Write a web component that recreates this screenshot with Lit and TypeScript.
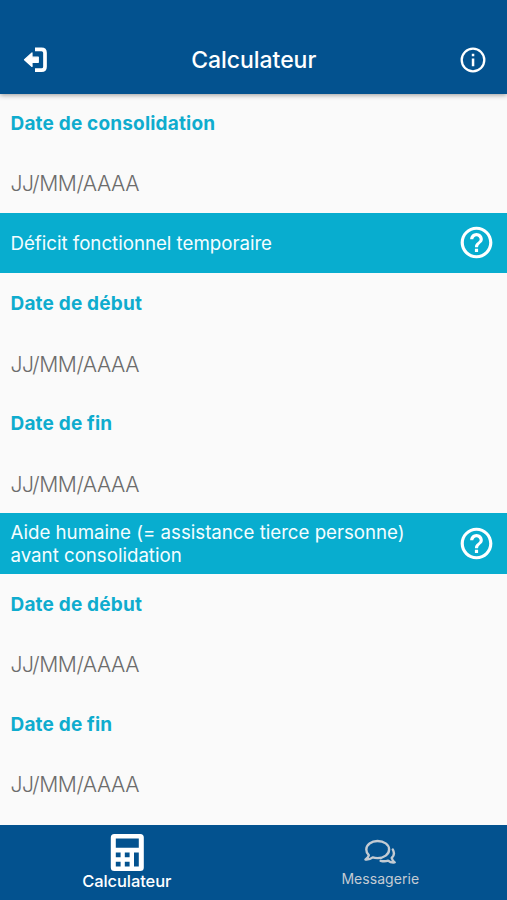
import { LitElement, html, css } from "lit";
import { customElement, property } from "lit/decorators.js";

@customElement("date-field")
class DateField extends LitElement {
  @property() label = "";
  static styles = css`
    :host { display: block; }
    .label, .value { height: 60px; box-sizing: border-box; padding: 1.5px 0 0 10.5px; display: flex; align-items: center; }
    .label { color: #0facce; font-weight: 650; font-size: 19px; letter-spacing: 0.18px; }
    .value { color: #6c6c6c; font-weight: 350; font-size: 21.2px; letter-spacing: -0.48px; }
  `;
  render() {
    return html`<div class="label">${this.label}</div><div class="value">JJ/MM/AAAA</div>`;
  }
}

@customElement("section-band")
class SectionBand extends LitElement {
  @property({ type: Array }) lines: string[] = [];
  static styles = css`
    :host { display: flex; align-items: center; justify-content: space-between; box-sizing: border-box;
      height: 60.5px; padding: 0 14px 0 10.5px; background: #08adcf; color: #f4fdff; }
    .title { padding-top: 2px; font-size: 18.7px; line-height: 23px; letter-spacing: -0.01px; white-space: nowrap; }
    svg { display: block; width: 33px; height: 33px; }
  `;
  render() {
    return html`<div class="title">${this.lines.map((l) => html`<div>${l}</div>`)}</div>
      <svg viewBox="1.6 1.6 20.8 20.8" fill="#fff"><path d="M11 18h2v-2h-2v2zm1-16C6.480 2 2 6.480 2 12s4.480 10 10 10 10-4.480 10-10S17.520 2 12 2zm0 18c-4.410 0-8-3.590-8-8s3.590-8 8-8 8 3.590 8 8-3.590 8-8 8zm0-14c-2.210 0-4 1.790-4 4h2c0-1.100.9-2 2-2s2 .9 2 2c0 2-3 1.750-3 5h2c0-2.250 3-2.500 3-5 0-2.210-1.790-4-4-4z"/></svg>`;
  }
}

@customElement("app-root")
class AppRoot extends LitElement {
  static styles = css`
    :host { display: flex; flex-direction: column; height: 900px; overflow: hidden; background: #fafafa;
      font-family: Inter, "Liberation Sans", sans-serif; }
    svg { display: block; }
    header { flex: none; height: 94px; box-sizing: border-box; padding: 25px 20.5px 0 23px; background: #03528f;
      color: #fff; display: grid; grid-template-columns: 26px 1fr 28px; align-items: center;
      box-shadow: 0 1px 5px rgba(0, 0, 0, 0.4); z-index: 1; }
    h1 { margin: 0; text-align: center; font-size: 23px; font-weight: 500; letter-spacing: -0.05px; }
    main { flex: 1; min-height: 0; overflow: hidden; margin-top: -1.5px; }
    nav { flex: none; height: 75px; background: #03528f; display: grid; grid-template-columns: 1fr 1fr; }
    .tab { display: flex; flex-direction: column; align-items: center; color: #c3cbd3; font-size: 14px;
      line-height: 18px; letter-spacing: 0.05px; padding-top: 14px; gap: 5px; }
    .tab.active { color: #fff; font-size: 16.5px; line-height: 20px; font-weight: 500; letter-spacing: -0.08px; padding-top: 9px; gap: 0; }
  `;
  render() {
    return html`
      <header>
        <svg width="26" height="26" viewBox="0 0 26 26"><path d="M12 2.300H18.500Q22 2.300 22 5.800V19.700Q22 23.200 18.500 23.200H12" fill="none" stroke="#fff" stroke-width="3.700"/><path d="M1.500 12.750 9 6V10.200H15.300V15.300H9V19.500Z" fill="#fff" stroke="#fff" stroke-width="1.200" stroke-linejoin="round"/></svg>
        <h1>Calculateur</h1>
        <svg width="28" height="28" viewBox="0 0 28 28"><circle cx="14" cy="14" r="11.300" fill="none" stroke="#fff" stroke-width="2.300"/><path d="M12.800 7.800h2.500v2.400h-2.500zM12.800 12.600h2.500v7.600h-2.500z" fill="#fff"/></svg>
      </header>
      <main>
        <date-field label="Date de consolidation"></date-field>
        <section-band .lines=${["Déficit fonctionnel temporaire"]}></section-band>
        <date-field label="Date de début"></date-field>
        <date-field label="Date de fin"></date-field>
        <section-band .lines=${["Aide humaine (= assistance tierce personne)", "avant consolidation"]}></section-band>
        <date-field label="Date de début"></date-field>
        <date-field label="Date de fin"></date-field>
      </main>
      <nav>
        <div class="tab active">
          <svg width="34" height="37" viewBox="-.8 0 34 37"><path fill="#fff" fill-rule="evenodd" d="M3.500 0h26Q33 0 33 3.500v30Q33 37 29.500 37h-26Q0 37 0 33.500v-30Q0 0 3.500 0zM5 4.500h23v9.300H5zM5 18.500h4.800v4.700H5zM14 18.500h4.800v4.700H14zM23.200 18.500H28v14h-4.800zM5 27.800h4.800v4.700H5zM14 27.800h4.800v4.700H14z"/></svg>
          <span>Calculateur</span>
        </div>
        <div class="tab">
          <svg width="32" height="26" viewBox="0 0 32 26" fill="none" stroke="#c3cbd3" stroke-width="2.400" stroke-linejoin="round" stroke-linecap="round"><path d="M13.500 2C7.300 2 2.300 5.700 2.300 10.400c0 2.500 1 4.400 2.500 5.800-.3 1.700-1.500 3.100-3.300 4.300 2.800.3 5.100-.4 7.200-2.100 1.500.5 3.100.7 4.800.7 6.500 0 11.600-3.800 11.600-8.700S20 2 13.500 2Z"/><path d="M28.800 10.500c1.800 3.500 1.300 6.500-1.100 8.500.5 2 1.500 3.300 3 4.400-2.500.4-4.700-.2-6.600-1.800-2.400.9-5 .9-7.400.2"/></svg>
          <span>Messagerie</span>
        </div>
      </nav>`;
  }
}
